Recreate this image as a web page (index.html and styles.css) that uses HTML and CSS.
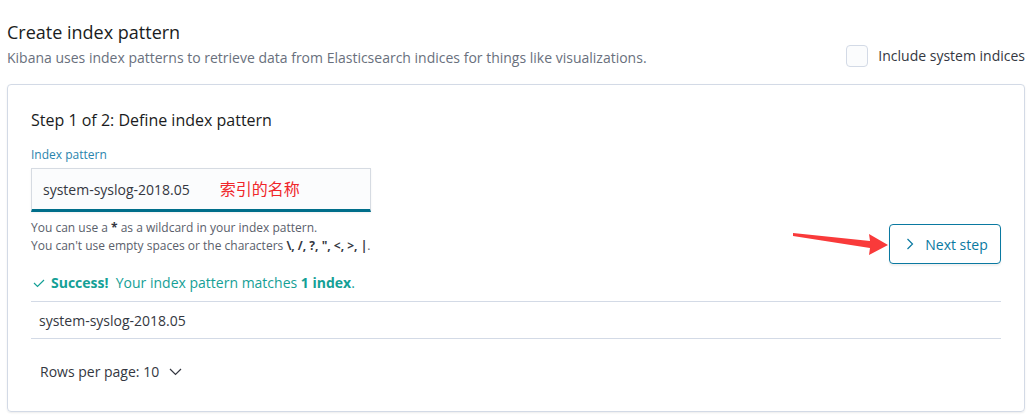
FILE: index.html
```html
<!DOCTYPE html>
<html>
<head>
<meta charset="utf-8">
<link rel="stylesheet" href="styles.css">
</head>
<body>
<div class="page">
  <div class="header">
    <div class="header-text">
      <h1 class="title">Create index pattern</h1>
      <p class="subtitle">Kibana uses index patterns to retrieve data from Elasticsearch indices for things like visualizations.</p>
    </div>
    <label class="sys-check">
      <span class="checkbox"></span>
      <span class="sys-label">Include system indices</span>
    </label>
  </div>

  <div class="panel">
    <h2 class="step-title">Step 1 of 2: Define index pattern</h2>
    <div class="form-row">
      <div class="form-col">
        <div class="field-label">Index pattern</div>
        <div class="input">
          <span class="input-value">system-syslog-2018.05</span>
          <span class="annot">索引的名称</span>
        </div>
        <div class="help">
          <div>You can use a <b>*</b> as a wildcard in your index pattern.</div>
          <div>You can't use empty spaces or the characters <b>\, /, ?, ", &lt;, &gt;, |</b>.</div>
        </div>
      </div>
      <button class="next-btn">
        <svg class="next-icon" width="8" height="12" viewBox="0 0 8 12"><path d="M1.5 1 L6.5 6 L1.5 11" fill="none" stroke="#0a79a1" stroke-width="1.2"/></svg>
        <span>Next step</span>
      </button>
    </div>

    <div class="success">
      <svg class="check" width="12" height="10" viewBox="0 0 12 10"><path d="M1 5 L4.5 8.5 L11 2" fill="none" stroke="#14a096" stroke-width="1.2"/></svg>
      <span><b>Success!</b>&nbsp; Your index pattern matches <b>1 index</b>.</span>
    </div>

    <div class="table-row">system-syslog-2018.05</div>

    <div class="pager">
      <span>Rows per page: 10</span>
      <svg class="pager-icon" width="13" height="8" viewBox="0 0 13 8"><path d="M1 1 L6.5 6.5 L12 1" fill="none" stroke="#343741" stroke-width="1.2"/></svg>
    </div>
  </div>
</div>
<svg class="arrow" width="1035" height="419" viewBox="0 0 1035 419">
  <polygon points="793,233 870,241 869,234 888,245 869,255 870,248 793,236" fill="#f93a3a"/>
</svg>
</body>
</html>
```

FILE: styles.css
```css
* { box-sizing: border-box; }
html, body { margin: 0; padding: 0; background: #fff; }
body {
  font-family: "Open Sans", "Noto Sans", "Noto Sans CJK SC", sans-serif;
  color: #343741;
  width: 1035px;
  height: 419px;
  overflow: hidden;
  position: relative;
}
.page { padding: 20px 10px 0 7px; }
.header {
  display: flex;
  justify-content: space-between;
  align-items: flex-end;
}
.title {
  margin: 0;
  font-size: 18px;
  line-height: 24px;
  font-weight: 400;
  color: #1a1c21;
}
.subtitle {
  margin: 4px 0 0;
  font-size: 14px;
  line-height: 20px;
  color: #69707d;
}
.sys-check {
  display: flex;
  align-items: center;
  margin-bottom: 1px;
}
.checkbox {
  width: 22px;
  height: 22px;
  border: 1px solid #d3dae6;
  border-radius: 4px;
  background: #fbfcfd;
}
.sys-label {
  margin-left: 10px;
  font-size: 14px;
  line-height: 20px;
  color: #343741;
}
.panel {
  margin-top: 16px;
  border: 1px solid #d3dae6;
  border-radius: 4px;
  box-shadow: 0 1px 2px rgba(0,0,0,0.08);
  padding: 23px 23px 27px;
  height: 328px;
}
.step-title {
  margin: 0;
  font-size: 16px;
  line-height: 24px;
  font-weight: 400;
  color: #1a1c21;
}
.form-row {
  display: flex;
  justify-content: space-between;
  align-items: flex-start;
}
.form-col { margin-top: 14px; }
.field-label {
  font-size: 12px;
  line-height: 18px;
  color: #2a84ad;
}
.input {
  margin-top: 4px;
  width: 340px;
  height: 44px;
  background: #fbfcfd;
  border: 1px solid #d6dbe2;
  border-bottom: 3px solid #006e8a;
  box-shadow: 0 1px 2px rgba(0,0,0,0.06);
  display: flex;
  align-items: center;
  padding: 0 11px 0;
}
.input-value {
  font-size: 14px;
  color: #343741;
  padding-top: 1px;
}
.annot {
  margin-left: 30px;
  font-size: 16px;
  color: #f0262a;
  font-family: "Noto Sans CJK SC", sans-serif;
  margin-top: -3px;
}
.help {
  margin-top: 7px;
  font-size: 12px;
  line-height: 18px;
  color: #5a606b;
}
.help b { color: #343741; }
.next-btn {
  margin-top: 92px;
  margin-bottom: -20px;
  width: 112px;
  height: 40px;
  border: 1px solid #0a79a1;
  border-radius: 4px;
  background: #fff;
  box-shadow: 0 2px 2px rgba(0,0,0,0.06);
  display: flex;
  align-items: center;
  justify-content: center;
  gap: 11px;
  font-family: inherit;
  font-size: 14px;
  color: #0a79a1;
  padding: 0 6px 0 10px;
  cursor: pointer;
}
.success {
  margin-top: 18px;
  display: flex;
  align-items: center;
  font-size: 14px;
  line-height: 20px;
  color: #14a096;
  padding-left: 2px;
}
.success b { font-weight: 700; }
.check { margin-right: 6px; }
.table-row {
  margin-top: 8px;
  border-top: 1px solid #d3dae6;
  border-bottom: 1px solid #d3dae6;
  height: 38px;
  display: flex;
  align-items: center;
  padding-left: 8px;
  font-size: 14px;
  color: #343741;
}
.pager {
  margin-top: 23px;
  padding-left: 9px;
  display: flex;
  align-items: center;
  font-size: 14px;
  line-height: 20px;
  color: #343741;
}
.pager-icon { margin-left: 10px; }
.arrow {
  position: absolute;
  top: 0;
  left: 0;
  pointer-events: none;
}
```
